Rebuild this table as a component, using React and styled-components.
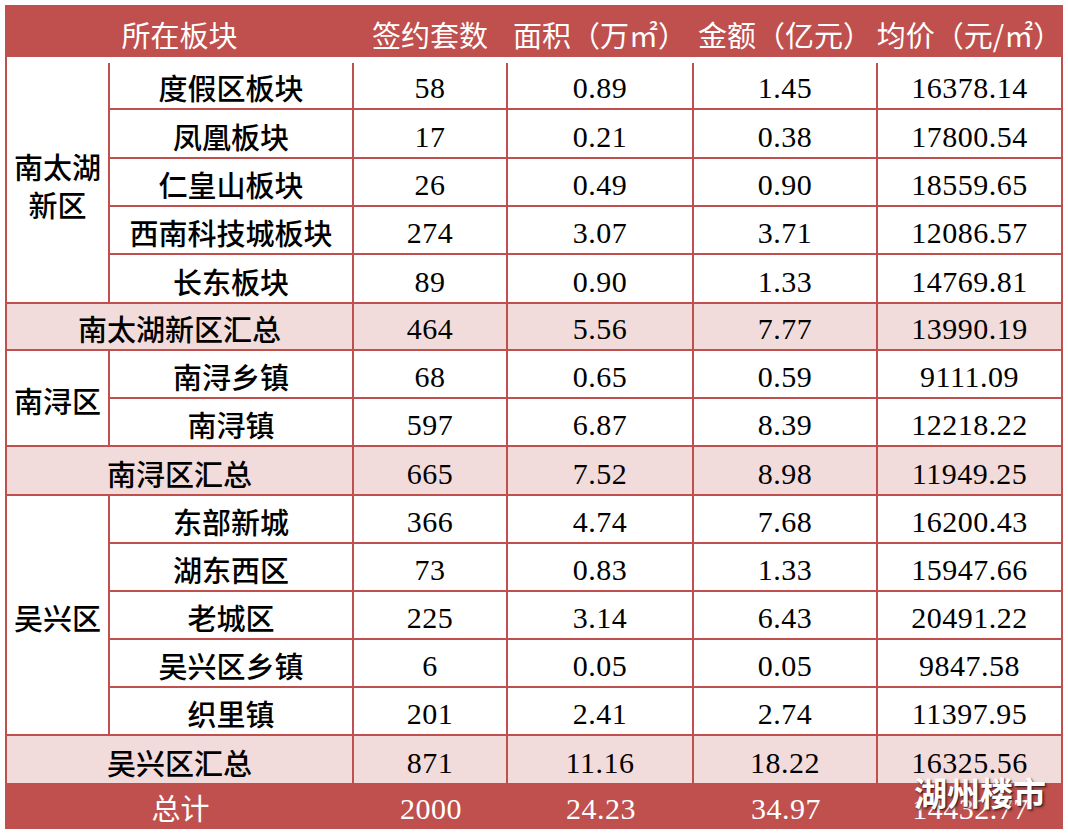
import React from "react";
import styled, { createGlobalStyle, css } from "styled-components";

const RED = "#C0504D";
const PINK = "#F2DCDB";
const CJK = `"Noto Sans CJK SC", "Noto Sans", sans-serif`;
const NUM = `"Liberation Serif", "Noto Sans CJK SC", serif`;

const Global = createGlobalStyle`
  html, body { margin: 0; padding: 0; background: #fff; }
  body { font-family: ${CJK}; }
`;

const Page = styled.div`
  position: relative;
  width: 1068px;
  height: 834px;
  padding: 5px 0 0 5px;
  box-sizing: border-box;
`;

const Grid = styled.div`
  display: grid;
  width: 1058px;
  box-sizing: border-box;
  padding: 2px;
  gap: 2px;
  background: ${RED};
  grid-template-columns: 101px 242px 152px 184px 182px 183px;
  grid-template-rows: ${(p) => p.$rows};
`;

const Head = styled.div`
  grid-column: span ${(p) => p.$span || 1};
  background: ${RED};
  color: #fff;
  font-family: ${CJK};
  font-size: 29px;
  line-height: 1;
  display: flex;
  align-items: center;
  justify-content: center;
  padding-top: 6px;
  white-space: nowrap;
  margin: 0 -2px;
`;

const Spacer = styled.div`
  grid-column: 1 / -1;
  background: #fff;
  margin-bottom: -2px;
  position: relative;
  z-index: 1;
`;

const tone = {
  plain: css`
    background: #fff;
    color: #000;
  `,
  sum: css`
    background: ${PINK};
    color: #000;
  `,
  total: css`
    background: ${RED};
    color: #fff;
  `,
};

const District = styled.div`
  grid-row: span ${(p) => p.$span};
  background: #fff;
  color: #000;
  font-family: ${CJK};
  font-weight: 500;
  font-size: 29px;
  line-height: 38px;
  display: flex;
  align-items: center;
  justify-content: center;
  text-align: center;
  padding: 4px 6px 0;
`;

const Label = styled.div`
  grid-column: span ${(p) => p.$span || 1};
  ${(p) => tone[p.$tone || "plain"]};
  font-family: ${CJK};
  font-weight: ${(p) => (p.$tone === "total" ? 400 : 500)};
  font-size: 29px;
  line-height: 1;
  display: flex;
  align-items: flex-end;
  justify-content: center;
  padding-bottom: ${(p) => (p.$tone === "total" ? 5 : 6)}px;
  white-space: nowrap;
  ${(p) => p.$tone === "total" && css`margin-right: -2px;`}
`;

const Num = styled.div`
  ${(p) => tone[p.$tone || "plain"]};
  font-family: ${NUM};
  font-size: 30px;
  letter-spacing: 0.5px;
  line-height: 1;
  display: flex;
  align-items: flex-end;
  justify-content: center;
  padding-bottom: ${(p) => (p.$tone === "total" ? 3 : 5)}px;
  ${(p) => p.$tone === "total" && css`margin-right: -2px;`}
`;

const Watermark = styled.div`
  position: absolute;
  left: 914px;
  top: 773px;
  font-family: ${CJK};
  font-weight: 700;
  font-size: 33px;
  line-height: 1.2;
  color: #fff;
  letter-spacing: 0px;
  text-shadow: 1px 1px 1px rgba(40, 20, 20, 0.75), 2px 2px 3px rgba(0, 0, 0, 0.35);
`;

const groups = [
  {
    name: "南太湖新区",
    rows: [
      ["度假区板块", "58", "0.89", "1.45", "16378.14"],
      ["凤凰板块", "17", "0.21", "0.38", "17800.54"],
      ["仁皇山板块", "26", "0.49", "0.90", "18559.65"],
      ["西南科技城板块", "274", "3.07", "3.71", "12086.57"],
      ["长东板块", "89", "0.90", "1.33", "14769.81"],
    ],
    sum: ["南太湖新区汇总", "464", "5.56", "7.77", "13990.19"],
  },
  {
    name: "南浔区",
    rows: [
      ["南浔乡镇", "68", "0.65", "0.59", "9111.09"],
      ["南浔镇", "597", "6.87", "8.39", "12218.22"],
    ],
    sum: ["南浔区汇总", "665", "7.52", "8.98", "11949.25"],
  },
  {
    name: "吴兴区",
    rows: [
      ["东部新城", "366", "4.74", "7.68", "16200.43"],
      ["湖东西区", "73", "0.83", "1.33", "15947.66"],
      ["老城区", "225", "3.14", "6.43", "20491.22"],
      ["吴兴区乡镇", "6", "0.05", "0.05", "9847.58"],
      ["织里镇", "201", "2.41", "2.74", "11397.95"],
    ],
    sum: ["吴兴区汇总", "871", "11.16", "18.22", "16325.56"],
  },
];

const total = ["总计", "2000", "24.23", "34.97", "14432.77"];

const rowHeights = [48, 4, 45, 47, 46, 46, 47, 45, 46, 46, 47, 46, 46, 46, 46, 46, 47, 42];

export default function App() {
  return (
    <Page>
      <Global />
      <Grid $rows={rowHeights.map((h) => `${h}px`).join(" ")}>
        <Head $span={2}>所在板块</Head>
        <Head>签约套数</Head>
        <Head>面积（万㎡）</Head>
        <Head>金额（亿元）</Head>
        <Head>均价（元/㎡）</Head>
        <Spacer />
        {groups.map((g) => (
          <React.Fragment key={g.name}>
            {g.rows.map((r, i) => (
              <React.Fragment key={r[0]}>
                {i === 0 && <District $span={g.rows.length}>{g.name}</District>}
                <Label>{r[0]}</Label>
                {r.slice(1).map((v, j) => (
                  <Num key={j}>{v}</Num>
                ))}
              </React.Fragment>
            ))}
            <Label $span={2} $tone="sum">
              {g.sum[0]}
            </Label>
            {g.sum.slice(1).map((v, j) => (
              <Num key={j} $tone="sum">
                {v}
              </Num>
            ))}
          </React.Fragment>
        ))}
        <Label $span={2} $tone="total">
          {total[0]}
        </Label>
        {total.slice(1).map((v, j) => (
          <Num key={j} $tone="total">
            {v}
          </Num>
        ))}
      </Grid>
      <Watermark>湖州楼市</Watermark>
    </Page>
  );
}
